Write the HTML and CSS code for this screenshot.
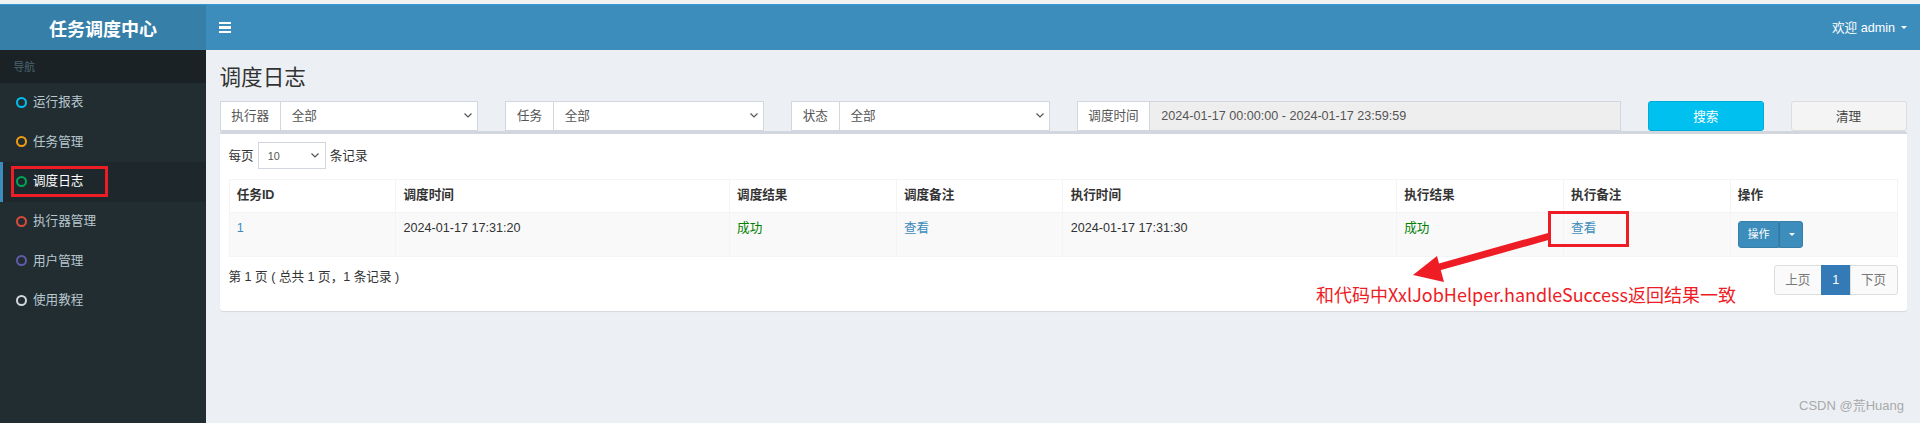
FILE: index.html
```html
<!DOCTYPE html>
<html lang="zh-CN">
<head>
<meta charset="utf-8">
<title>调度日志</title>
<link rel="stylesheet" href="styles.css">
</head>
<body>
<div class="page">
  <div class="topstrip"></div>
  <header class="main-header">
    <div class="logo">任务调度中心</div>
    <nav class="navbar">
      <span class="toggle"><i></i><i></i><i></i></span>
      <span class="user">欢迎 admin <span class="caret"></span></span>
    </nav>
  </header>
  <div class="wrapper">
    <aside class="sidebar">
      <div class="nav-header">导航</div>
      <ul class="menu">
        <li><span class="dot aqua"></span>运行报表</li>
        <li><span class="dot yellow"></span>任务管理</li>
        <li class="active"><span class="dot green"></span>调度日志</li>
        <li><span class="dot red"></span>执行器管理</li>
        <li><span class="dot purple"></span>用户管理</li>
        <li><span class="dot gray"></span>使用教程</li>
      </ul>
    </aside>
    <main class="content">
      <h1 class="title">调度日志</h1>
      <section class="section">
        <div class="filters">
          <div class="igroup span2"><span class="addon">执行器</span><div class="sel"><span>全部</span><svg width="8" height="5" viewBox="0 0 8 5"><path d="M0.5 0.5 L4 4 L7.5 0.5" fill="none" stroke="#555" stroke-width="1.2"/></svg></div></div>
          <div class="igroup span2"><span class="addon">任务</span><div class="sel"><span>全部</span><svg width="8" height="5" viewBox="0 0 8 5"><path d="M0.5 0.5 L4 4 L7.5 0.5" fill="none" stroke="#555" stroke-width="1.2"/></svg></div></div>
          <div class="igroup span2"><span class="addon">状态</span><div class="sel"><span>全部</span><svg width="8" height="5" viewBox="0 0 8 5"><path d="M0.5 0.5 L4 4 L7.5 0.5" fill="none" stroke="#555" stroke-width="1.2"/></svg></div></div>
          <div class="igroup span4"><span class="addon">调度时间</span><div class="sel readonly"><span>2024-01-17 00:00:00 - 2024-01-17 23:59:59</span></div></div>
          <button class="btn btn-info">搜索</button>
          <button class="btn btn-default">清理</button>
        </div>
        <div class="box">
          <div class="length">每页 <span class="lsel"><span>10</span><svg width="8" height="5" viewBox="0 0 8 5"><path d="M0.5 0.5 L4 4 L7.5 0.5" fill="none" stroke="#555" stroke-width="1.2"/></svg></span> 条记录</div>
          <table class="tbl">
            <colgroup>
              <col class="c1"><col class="c2"><col class="c1"><col class="c1"><col class="c2"><col class="c1"><col class="c1"><col class="c1">
            </colgroup>
            <thead>
              <tr><th>任务ID</th><th>调度时间</th><th>调度结果</th><th>调度备注</th><th>执行时间</th><th>执行结果</th><th>执行备注</th><th>操作</th></tr>
            </thead>
            <tbody>
              <tr>
                <td><a class="link">1</a></td>
                <td>2024-01-17 17:31:20</td>
                <td><span class="ok">成功</span></td>
                <td><a class="link">查看</a></td>
                <td>2024-01-17 17:31:30</td>
                <td><span class="ok">成功</span></td>
                <td><a class="link">查看</a></td>
                <td><span class="bgroup"><span class="bmain">操作</span><span class="bcaret"><span class="caret"></span></span></span></td>
              </tr>
            </tbody>
          </table>
          <div class="footer">
            <div class="info">第 1 页 ( 总共 1 页，1 条记录 )</div>
            <ul class="pagination">
              <li>上页</li>
              <li class="on">1</li>
              <li>下页</li>
            </ul>
          </div>
        </div>
      </section>
    </main>
  </div>

  <div class="mark box-side"></div>
  <div class="mark box-cell"></div>
  <svg class="arrow" width="1920" height="423" viewBox="0 0 1920 423">
    <line x1="1550" y1="236" x2="1432" y2="269" stroke="#ee1c25" stroke-width="7"/>
    <polygon points="1413,275 1437,256 1444,282" fill="#ee1c25"/>
  </svg>
  <div class="note">和代码中XxlJobHelper.handleSuccess返回结果一致</div>
  <div class="watermark">CSDN @荒Huang</div>
</div>
</body>
</html>
```

FILE: styles.css
```css
* { box-sizing: border-box; }
html, body { margin: 0; padding: 0; }
body {
  width: 1920px;
  height: 423px;
  overflow: hidden;
  font-family: "Liberation Sans", "Noto Sans CJK SC", sans-serif;
  font-size: 12.6px;
  line-height: 18px;
  color: #333;
  background: #ecf0f5;
}
.page { position: relative; width: 1920px; height: 423px; display: flex; flex-direction: column; }
.topstrip { height: 4px; background: #f1f1f1; }
.main-header { display: flex; height: 46px; border-top: 1px solid #2f9ad8; }
.logo {
  width: 206px;
  background: #367fa9;
  color: #fff;
  font-family: "Noto Sans CJK SC", sans-serif;
  font-weight: 700;
  font-size: 18px;
  display: flex; align-items: center; justify-content: center;
}
.navbar {
  flex: 1;
  background: #3c8dbc;
  display: flex; align-items: center; justify-content: space-between;
  padding: 0 13px 0 13px;
  color: #fff;
}
.toggle { display: flex; flex-direction: column; gap: 2px; width: 12px; }
.toggle i { display: block; height: 2.5px; background: #fff; }
.user { font-size: 12.6px; display: flex; align-items: center; gap: 4px; }
.caret {
  display: inline-block; width: 0; height: 0;
  border-left: 3.5px solid transparent; border-right: 3.5px solid transparent;
  border-top: 3.5px solid #fff; margin-left: 2px;
}
.wrapper { flex: 1; display: flex; }
.sidebar { width: 206px; background: #222d32; }
.nav-header {
  height: 33px; background: #1a2226; color: #4b646f;
  font-size: 10.8px; padding: 0 13.5px; display: flex; align-items: center;
}
.menu { list-style: none; margin: 0; padding: 0; }
.menu li {
  height: 39.6px; display: flex; align-items: center;
  padding-left: 13px; padding-bottom: 1px; border-left: 3px solid transparent;
  color: #b8c7ce; font-size: 12.6px;
}
.menu li.active { background: #1e282c; border-left-color: #3c8dbc; color: #fff; }
.dot {
  width: 11px; height: 11px; border-radius: 50%;
  border: 2.2px solid #ccc; margin-right: 6px; flex: none;
}
.dot.aqua { border-color: #00c0ef; }
.dot.yellow { border-color: #f39c12; }
.dot.green { border-color: #00a65a; }
.dot.red { border-color: #dd4b39; }
.dot.purple { border-color: #605ca8; }
.dot.gray { border-color: #d2d6de; }

.content { flex: 1; padding: 13.5px 13.5px 0 13.5px; }
.title {
  margin: 0; font-weight: 400; font-size: 21.6px; line-height: 24px;
  font-family: "Noto Sans CJK SC", sans-serif; color: #333;
}
.section { padding-top: 13px; }
.filters {
  display: grid; grid-template-columns: repeat(12, 1fr); column-gap: 27px;
  height: 30.6px;
}
.span2 { grid-column: span 2; }
.span4 { grid-column: span 4; }
.igroup { display: flex; height: 30.6px; }
.addon {
  border: 1px solid #d2d6de; background: #fff; color: #555;
  padding: 0 10.8px; display: flex; align-items: center; white-space: nowrap;
}
.sel {
  flex: 1; border: 1px solid #d2d6de; border-left: none; background: #fff;
  color: #555; display: flex; align-items: center; justify-content: space-between;
  padding: 0 5px 0 10.8px;
}
.sel.readonly { background: #eee; }
.btn {
  font-family: inherit; font-size: 12.6px; height: 30.6px; border-radius: 3px;
  border: 1px solid transparent; padding: 0;
}
.btn-info { background: #00c0ef; border-color: #00acd6; color: #fff; }
.btn-default { background: #f4f4f4; border-color: #ddd; color: #444; }

.box {
  background: #fff; border-top: 3px solid #d2d6de; border-radius: 3px;
  box-shadow: 0 1px 1px rgba(0,0,0,.1); padding: 8px 9px 9px 9px;
}
.length { display: flex; align-items: center; gap: 4px; height: 27px; }
.lsel {
  width: 68px; height: 27px; border: 1px solid #d2d6de; display: flex;
  align-items: center; justify-content: space-between; padding: 0 6px 0 9px;
  font-size: 10.8px; color: #555;
}
.tbl {
  width: 100%; border-collapse: collapse; table-layout: fixed;
  margin-top: 10px; border: 1px solid #f4f4f4;
}
.c1 { width: 10%; }
.c2 { width: 20%; }
.tbl th, .tbl td {
  border: 1px solid #f4f4f4; text-align: left; vertical-align: top;
  padding: 7px 7.2px; line-height: 17.5px;
}
.tbl th { font-weight: 700; border-bottom-width: 1px; }
.tbl tbody tr { background: #f9f9f9; }
.tbl td { padding-top: 7.5px; padding-bottom: 7.5px; }
.link { color: #3c8dbc; text-decoration: none; }
.ok { color: #008000; }
.bgroup { display: inline-flex; height: 27px; margin-top: 1px; border-radius: 3px; overflow: hidden; }
.bmain, .bcaret {
  background: #3c8dbc; border: 1px solid #367fa9; color: #fff;
  font-size: 10.8px; display: flex; align-items: center;
}
.bmain { padding: 0 9px; border-radius: 3px 0 0 3px; }
.bcaret { padding: 0 7px; border-left: 1px solid #2f7aa5; border-radius: 0 3px 3px 0; }

.footer { display: flex; justify-content: space-between; align-items: flex-start; margin-top: 8px; margin-bottom: 7px; }
.info { padding-top: 3px; }
.pagination { list-style: none; margin: 0; padding: 0; display: flex; }
.pagination li {
  height: 30px; padding: 0 10.4px; border: 1px solid #ddd; margin-left: -1px;
  display: flex; align-items: center; color: #777; background: #fafafa;
}
.pagination li:first-child { border-radius: 3px 0 0 3px; }
.pagination li:last-child { border-radius: 0 3px 3px 0; }
.pagination li.on { background: #337ab7; border-color: #337ab7; color: #fff; }

.mark { position: absolute; border: 3px solid #ee1c25; }
.box-side { left: 11px; top: 166px; width: 97px; height: 31px; }
.box-cell { left: 1548px; top: 211px; width: 81px; height: 36px; }
.arrow { position: absolute; left: 0; top: 0; pointer-events: none; }
.note {
  position: absolute; left: 1316px; top: 283px;
  color: #ee1c25; font-size: 18px; line-height: 22px;
  font-family: "Noto Sans CJK SC", sans-serif; white-space: nowrap;
}
.watermark {
  position: absolute; right: 16px; top: 397px;
  color: #a9a9a9; font-size: 13px; line-height: 18px;
  font-family: "Liberation Sans", "Noto Sans CJK SC", sans-serif;
}
```
